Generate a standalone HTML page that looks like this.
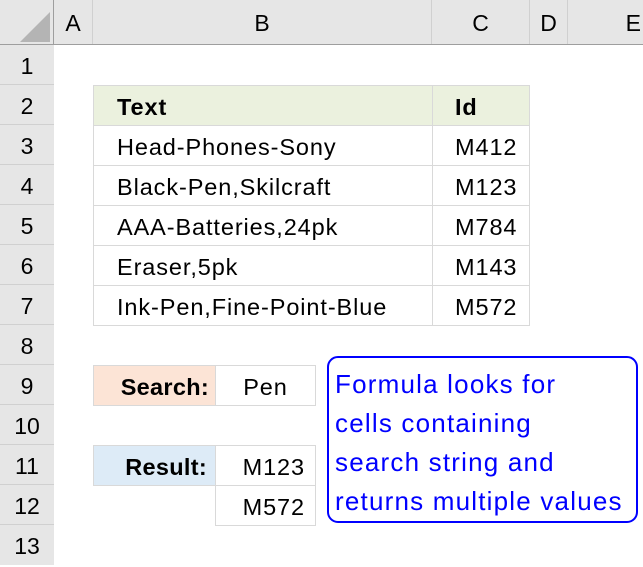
<!DOCTYPE html>
<html><head><style>
body{margin:0;width:643px;height:564px;overflow:hidden;background:#fff;font-family:"Liberation Sans",sans-serif;position:relative}
div{position:absolute;box-sizing:border-box}
.h{background:#e6e6e6;color:#000;font-size:23px;text-align:center;line-height:46px;top:0;height:44px;border-right:1px solid #d0d0d0}
.r{background:#e6e6e6;left:0;width:54px;height:40px;font-size:23px;text-align:center;line-height:42px;border-bottom:1px solid #d0d0d0}
.c{height:41px;border:1px solid #d9d9d9;font-size:23.5px;line-height:42px;white-space:nowrap;letter-spacing:0.9px}
</style></head><body>
<div style="left:0;top:0;width:643px;height:45px;background:#e6e6e6;border-bottom:1px solid #9e9e9e"></div>
<div style="left:53px;top:0;width:1px;height:564px;background:#9e9e9e"></div>
<svg style="position:absolute;left:20px;top:12px" width="30" height="30"><polygon points="30,0 30,30 0,30" fill="#b4b4b4"/></svg>
<div class="h" style="left:54px;width:39px">A</div>
<div class="h" style="left:93px;width:339px">B</div>
<div class="h" style="left:432px;width:98px">C</div>
<div class="h" style="left:530px;width:38px">D</div>
<div class="h" style="left:568px;width:75px;border:none;text-align:right;padding-right:2px">E</div>

<div class="r" style="top:45px">1</div>
<div class="r" style="top:85px">2</div>
<div class="r" style="top:125px">3</div>
<div class="r" style="top:165px">4</div>
<div class="r" style="top:205px">5</div>
<div class="r" style="top:245px">6</div>
<div class="r" style="top:285px">7</div>
<div class="r" style="top:325px">8</div>
<div class="r" style="top:365px">9</div>
<div class="r" style="top:405px">10</div>
<div class="r" style="top:445px">11</div>
<div class="r" style="top:485px">12</div>
<div class="r" style="top:525px;border:none">13</div>

<div class="c" style="left:93px;top:85px;width:340px;background:#ebf1de;font-weight:bold;padding-left:23px">Text</div>
<div class="c" style="left:432px;top:85px;width:98px;background:#ebf1de;font-weight:bold;padding-left:22px">Id</div>
<div class="c" style="left:93px;top:125px;width:340px;padding-left:23px">Head-Phones-Sony</div>
<div class="c" style="left:432px;top:125px;width:98px;padding-left:22px">M412</div>
<div class="c" style="left:93px;top:165px;width:340px;padding-left:23px">Black-Pen,Skilcraft</div>
<div class="c" style="left:432px;top:165px;width:98px;padding-left:22px">M123</div>
<div class="c" style="left:93px;top:205px;width:340px;padding-left:23px">AAA-Batteries,24pk</div>
<div class="c" style="left:432px;top:205px;width:98px;padding-left:22px">M784</div>
<div class="c" style="left:93px;top:245px;width:340px;padding-left:23px">Eraser,5pk</div>
<div class="c" style="left:432px;top:245px;width:98px;padding-left:22px">M143</div>
<div class="c" style="left:93px;top:285px;width:340px;padding-left:23px">Ink-Pen,Fine-Point-Blue</div>
<div class="c" style="left:432px;top:285px;width:98px;padding-left:22px">M572</div>

<div class="c" style="left:93px;top:365px;width:123px;background:#fce4d6;font-weight:bold;text-align:right;padding-right:6px;letter-spacing:0.3px">Search:</div>
<div class="c" style="left:215px;top:365px;width:101px;text-align:center">Pen</div>
<div class="c" style="left:93px;top:445px;width:123px;background:#ddebf7;font-weight:bold;text-align:right;padding-right:8px;letter-spacing:0.3px">Result:</div>
<div class="c" style="left:215px;top:445px;width:101px;text-align:right;padding-right:10px">M123</div>
<div class="c" style="left:215px;top:485px;width:101px;text-align:right;padding-right:10px">M572</div>

<div style="left:327px;top:356px;width:311px;height:167px;border:2px solid #0000ff;border-radius:11px;color:#0000ff;font-size:26px;line-height:39px;padding:7px 0 0 6px;white-space:nowrap;letter-spacing:1.2px">Formula looks for<br>cells containing<br>search string and<br>returns multiple values</div>
</body></html>
